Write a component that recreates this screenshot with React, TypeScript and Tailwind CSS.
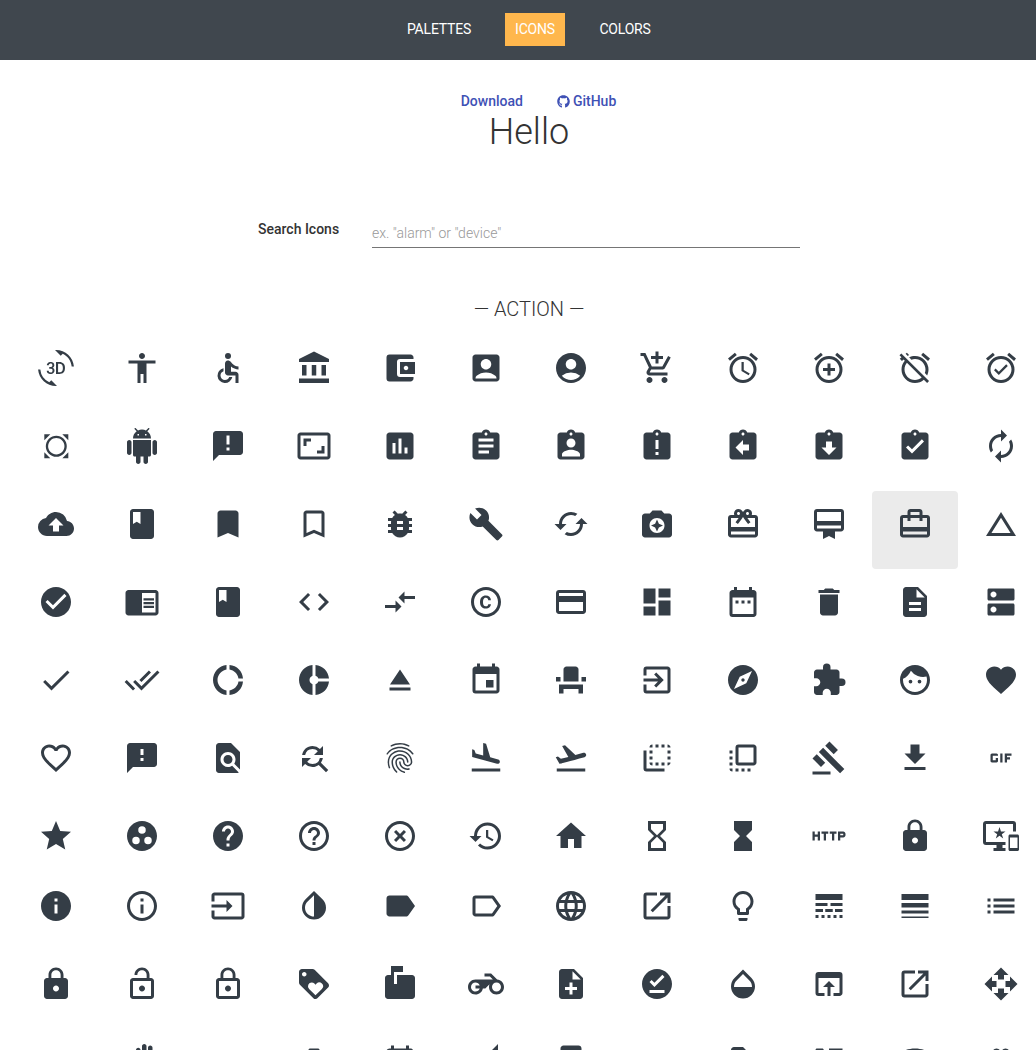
import {
  Md3dRotation, MdAccessibility, MdAccessible, MdAccountBalance, MdAccountBalanceWallet, MdAccountBox, MdAccountCircle, MdAddShoppingCart, MdAlarm, MdAlarmAdd, MdAlarmOff, MdAlarmOn,
  MdAllOut, MdAnnouncement, MdAspectRatio, MdAssessment, MdAssignment, MdAssignmentInd, MdAssignmentLate, MdAssignmentReturn, MdAssignmentReturned, MdAssignmentTurnedIn, MdAutorenew,
  MdBackup, MdBook, MdBookmark, MdBookmarkBorder, MdBugReport, MdBuild, MdCached, MdCameraEnhance, MdCardGiftcard, MdCardMembership, MdCardTravel, MdChangeHistory,
  MdCheckCircle, MdChromeReaderMode, MdClass, MdCode, MdCompareArrows, MdCopyright, MdCreditCard, MdDashboard, MdDateRange, MdDelete, MdDescription, MdDns,
  MdDone, MdDoneAll, MdDonutLarge, MdDonutSmall, MdEject, MdEvent, MdEventSeat, MdExitToApp, MdExplore, MdExtension, MdFace, MdFavorite,
  MdFavoriteBorder, MdFeedback, MdFindInPage, MdFindReplace, MdFingerprint, MdFlightLand, MdFlightTakeoff, MdFlipToBack, MdFlipToFront, MdGavel, MdGetApp, MdGif,
  MdGrade, MdGroupWork, MdHelp, MdHelpOutline, MdHighlightOff, MdHistory, MdHome, MdHourglassEmpty, MdHourglassFull, MdHttp, MdHttps, MdImportantDevices,
  MdInfo, MdInfoOutline, MdInput, MdInvertColors, MdLabel, MdLabelOutline, MdLanguage, MdLaunch, MdLightbulbOutline, MdLineStyle, MdLineWeight, MdList,
  MdLock, MdLockOpen, MdLockOutline, MdLoyalty, MdMarkunreadMailbox, MdNoteAdd, MdOfflinePin, MdOpacity, MdOpenInBrowser, MdOpenInNew, MdOpenWith,
  MdPageview, MdPanTool, MdPayment, MdPermCameraMic, MdPermContactCalendar, MdPermDataSetting, MdPermDeviceInformation, MdPermIdentity, MdPermMedia, MdPermPhoneMsg, MdPermScanWifi, MdPets,
} from "react-icons/md";
import { FaGithub } from "react-icons/fa";

// not in react-icons any more
function MdMotorcycle({ className }: { className?: string }) {
  return (
    <svg viewBox="0 0 24 24" fill="currentColor" className={className}>
      <path d="M19.44 9.03L15.41 5H11v2h3.59l2 2H5c-2.8 0-5 2.2-5 5s2.2 5 5 5c2.46 0 4.45-1.69 4.9-4h1.65l2.77-2.77c-.21.54-.32 1.14-.32 1.77 0 2.8 2.2 5 5 5s5-2.2 5-5c0-2.65-1.97-4.77-4.56-4.97zM7.82 15C7.4 16.15 6.28 17 5 17c-1.63 0-3-1.37-3-3s1.37-3 3-3c1.28 0 2.4.85 2.82 2H5v2h2.82zM19 17c-1.66 0-3-1.34-3-3s1.34-3 3-3 3 1.34 3 3-1.34 3-3 3z" />
    </svg>
  );
}

// the old full-body android, the package only has the head now
function MdAndroidOld({ className }: { className?: string }) {
  return (
    <svg viewBox="0 0 24 24" fill="currentColor" className={className}>
      <path d="M6 18c0 .55.45 1 1 1h1v3.5c0 .83.67 1.5 1.5 1.5s1.5-.67 1.5-1.5V19h2v3.5c0 .83.67 1.5 1.5 1.5s1.5-.67 1.5-1.5V19h1c.55 0 1-.45 1-1V8H6v10zM3.5 8C2.67 8 2 8.67 2 9.5v7c0 .83.67 1.5 1.5 1.5S5 17.33 5 16.5v-7C5 8.67 4.33 8 3.5 8zm17 0c-.83 0-1.5.67-1.5 1.5v7c0 .83.67 1.5 1.5 1.5s1.5-.67 1.5-1.5v-7c0-.83-.67-1.5-1.5-1.5zm-4.97-5.84l1.3-1.3c.2-.2.2-.51 0-.71-.2-.2-.51-.2-.71 0l-1.48 1.48C13.85 1.23 12.95 1 12 1c-.96 0-1.86.23-2.66.63L7.85.15c-.2-.2-.51-.2-.71 0-.2.2-.2.51 0 .71l1.31 1.31C6.97 3.26 6 5.01 6 7h12c0-1.99-.97-3.75-2.47-4.84zM10 5H9V4h1v1zm5 0h-1V4h1v1z" />
    </svg>
  );
}

const ICONS = [
  Md3dRotation, MdAccessibility, MdAccessible, MdAccountBalance, MdAccountBalanceWallet, MdAccountBox, MdAccountCircle, MdAddShoppingCart, MdAlarm, MdAlarmAdd, MdAlarmOff, MdAlarmOn,
  MdAllOut, MdAndroidOld, MdAnnouncement, MdAspectRatio, MdAssessment, MdAssignment, MdAssignmentInd, MdAssignmentLate, MdAssignmentReturn, MdAssignmentReturned, MdAssignmentTurnedIn, MdAutorenew,
  MdBackup, MdBook, MdBookmark, MdBookmarkBorder, MdBugReport, MdBuild, MdCached, MdCameraEnhance, MdCardGiftcard, MdCardMembership, MdCardTravel, MdChangeHistory,
  MdCheckCircle, MdChromeReaderMode, MdClass, MdCode, MdCompareArrows, MdCopyright, MdCreditCard, MdDashboard, MdDateRange, MdDelete, MdDescription, MdDns,
  MdDone, MdDoneAll, MdDonutLarge, MdDonutSmall, MdEject, MdEvent, MdEventSeat, MdExitToApp, MdExplore, MdExtension, MdFace, MdFavorite,
  MdFavoriteBorder, MdFeedback, MdFindInPage, MdFindReplace, MdFingerprint, MdFlightLand, MdFlightTakeoff, MdFlipToBack, MdFlipToFront, MdGavel, MdGetApp, MdGif,
  MdGrade, MdGroupWork, MdHelp, MdHelpOutline, MdHighlightOff, MdHistory, MdHome, MdHourglassEmpty, MdHourglassFull, MdHttp, MdHttps, MdImportantDevices,
  MdInfo, MdInfoOutline, MdInput, MdInvertColors, MdLabel, MdLabelOutline, MdLanguage, MdLaunch, MdLightbulbOutline, MdLineStyle, MdLineWeight, MdList,
  MdLock, MdLockOpen, MdLockOutline, MdLoyalty, MdMarkunreadMailbox, MdMotorcycle, MdNoteAdd, MdOfflinePin, MdOpacity, MdOpenInBrowser, MdOpenInNew, MdOpenWith,
  MdPageview, MdPanTool, MdPayment, MdPermCameraMic, MdPermContactCalendar, MdPermDataSetting, MdPermDeviceInformation, MdPermIdentity, MdPermMedia, MdPermPhoneMsg, MdPermScanWifi, MdPets,
];

const HOVERED = 34;

export default function App() {
  return (
    <div className="h-[1050px] overflow-hidden bg-white font-['Roboto',sans-serif] text-[#333]">
      <div className="w-[1058px]">
        {/* Nav */}
        <nav className="flex h-[60px] items-center justify-center gap-6 bg-[#40474e] pb-px text-[14px] leading-[33px] tracking-[-0.2px] text-white">
          <a className="h-[33px] w-[84px] text-center">PALETTES</a>
          <a className="h-[33px] w-[60px] bg-[#ffb74d] text-center">ICONS</a>
          <a className="h-[33px] w-[72px] text-center">COLORS</a>
        </nav>

        {/* Links and title */}
        <div className="mt-[33px] flex justify-center gap-[34px] pl-[19px] text-[14px] leading-4 font-medium text-[#3f51b5]">
          <a>Download</a>
          <a className="flex items-center gap-[3px]">
            <FaGithub className="h-[13px] w-[13px]" />
            GitHub
          </a>
        </div>
        <h1 className="mt-[1px] text-center text-[36px] leading-[44px] font-light">Hello</h1>

        {/* Search */}
        <div className="mt-[60px] flex items-start pl-[258px]">
          <label className="mt-[7px] w-[114px] text-[14px] leading-4 font-medium">Search Icons</label>
          <input
            placeholder={'ex. "alarm" or "device"'}
            className="h-[34px] w-[428px] border-b border-[#757575] pt-[5px] text-[14px] font-light outline-none placeholder:text-[#999]"
          />
        </div>

        <h2 className="mt-[49px] text-center text-[20px] leading-6 font-light">— ACTION —</h2>

        {/* Icon grid */}
        <div className="mt-[14px] ml-[13.5px] grid w-[1030px] grid-cols-12 grid-rows-[repeat(6,78px)_70px_repeat(3,78px)] text-[#343d46]">
          {ICONS.map((Icon, i) => (
            <div key={i} className={`flex justify-center rounded pt-[15px] ${i === HOVERED ? "bg-[#ebebeb]" : ""}`}>
              <Icon className="h-9 w-9" />
            </div>
          ))}
        </div>
      </div>
    </div>
  );
}
